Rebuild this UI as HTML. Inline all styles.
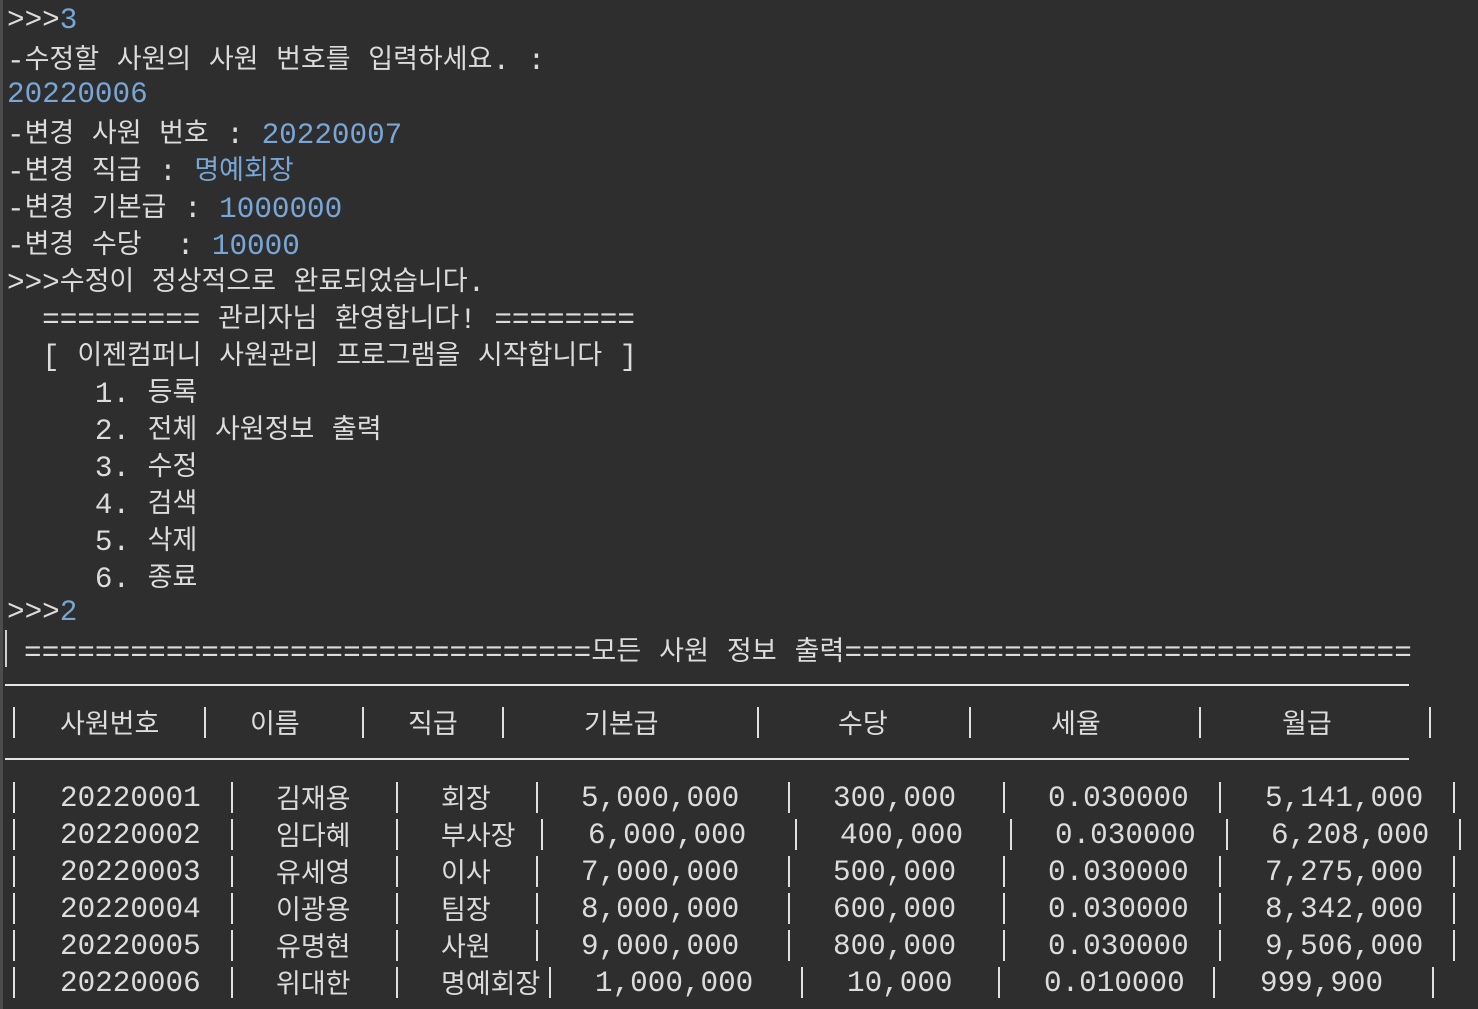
<!DOCTYPE html>
<html><head><meta charset="utf-8"><style>
html,body{margin:0;padding:0}
body{width:1478px;height:1009px;background:#2e2e2e;position:relative;overflow:hidden;font-family:"Liberation Mono","Noto Sans CJK KR",monospace;font-size:29.3px;color:#dcdcdc}
.l{position:absolute;left:7px;height:37px;line-height:37px;white-space:pre}
.kl{margin-top:4px}
.k{font-family:"Noto Sans CJK KR","NanumGothic",sans-serif;font-size:27px}
.l .k{position:relative;top:-1px;line-height:1}
.c.k{margin-top:-2px}
.b{color:#78a6d6}
.c{position:absolute;height:37px;line-height:37px;white-space:pre}
.p{position:absolute;width:2px;height:31px;background:#e0e0e0}
.r{position:absolute;left:5px;width:1404px;height:2px;background:#e6e6e6}
</style></head><body>
<div style="position:absolute;left:0;top:0;width:3px;height:1009px;background:#4c4c4c"></div>
<div style="position:absolute;left:5px;top:630px;width:2px;height:37px;background:#cfcfcf"></div>

<div class="l" style="top:2px">&gt;&gt;&gt;<span class="b">3</span></div>
<div class="l kl" style="top:39px">-<span class="k">수정할</span> <span class="k">사원의</span> <span class="k">사원</span> <span class="k">번호를</span> <span class="k">입력하세요</span>. :</div>
<div class="l b" style="top:76px">20220006</div>
<div class="l kl" style="top:113px">-<span class="k">변경</span> <span class="k">사원</span> <span class="k">번호</span> : <span class="b">20220007</span></div>
<div class="l kl" style="top:150px">-<span class="k">변경</span> <span class="k">직급</span> : <span class="k b">명예회장</span></div>
<div class="l kl" style="top:187px">-<span class="k">변경</span> <span class="k">기본급</span> : <span class="b">1000000</span></div>
<div class="l kl" style="top:224px">-<span class="k">변경</span> <span class="k">수당</span>  : <span class="b">10000</span></div>
<div class="l kl" style="top:261px">&gt;&gt;&gt;<span class="k">수정이</span> <span class="k">정상적으로</span> <span class="k">완료되었습니다</span>.</div>
<div class="l kl" style="top:298px">  ========= <span class="k">관리자님</span> <span class="k">환영합니다</span>! ========</div>
<div class="l kl" style="top:335px">  [ <span class="k">이젠컴퍼니</span> <span class="k">사원관리</span> <span class="k">프로그램을</span> <span class="k">시작합니다</span> ]</div>
<div class="l kl" style="top:372px">     1. <span class="k">등록</span></div>
<div class="l kl" style="top:409px">     2. <span class="k">전체</span> <span class="k">사원정보</span> <span class="k">출력</span></div>
<div class="l kl" style="top:446px">     3. <span class="k">수정</span></div>
<div class="l kl" style="top:483px">     4. <span class="k">검색</span></div>
<div class="l kl" style="top:520px">     5. <span class="k">삭제</span></div>
<div class="l kl" style="top:557px">     6. <span class="k">종료</span></div>
<div class="l" style="top:594px">&gt;&gt;&gt;<span class="b">2</span></div>
<div class="l kl" style="top:631px;left:24px;letter-spacing:0.15px">================================<span class="k">모든</span> <span class="k">사원</span> <span class="k">정보</span> <span class="k">출력</span>================================</div>

<div class="r" style="top:684px"></div>
<div class="r" style="top:758px"></div>

<div class="p" style="left:13px;top:707px"></div><div class="p" style="left:204px;top:707px"></div><div class="p" style="left:362px;top:707px"></div><div class="p" style="left:502px;top:707px"></div><div class="p" style="left:757px;top:707px"></div><div class="p" style="left:969px;top:707px"></div><div class="p" style="left:1199px;top:707px"></div><div class="p" style="left:1429px;top:707px"></div>
<div class="c k" style="left:60px;top:705px">사원번호</div>
<div class="c k" style="left:250px;top:705px">이름</div>
<div class="c k" style="left:408px;top:705px">직급</div>
<div class="c k" style="left:584px;top:705px">기본급</div>
<div class="c k" style="left:838px;top:705px">수당</div>
<div class="c k" style="left:1051px;top:705px">세율</div>
<div class="c k" style="left:1282px;top:705px">월급</div>

<div class="p" style="left:13px;top:782px"></div><div class="p" style="left:231px;top:782px"></div><div class="p" style="left:396px;top:782px"></div><div class="p" style="left:536px;top:782px"></div><div class="p" style="left:788px;top:782px"></div><div class="p" style="left:1003px;top:782px"></div><div class="p" style="left:1219px;top:782px"></div><div class="p" style="left:1453px;top:782px"></div>
<div class="c" style="left:60px;top:780px">20220001</div><div class="c k" style="left:276px;top:780px">김재용</div><div class="c k" style="left:441px;top:780px">회장</div><div class="c" style="left:581px;top:780px">5,000,000</div><div class="c" style="left:833px;top:780px">300,000</div><div class="c" style="left:1048px;top:780px">0.030000</div><div class="c" style="left:1265px;top:780px">5,141,000</div>

<div class="p" style="left:13px;top:819px"></div><div class="p" style="left:231px;top:819px"></div><div class="p" style="left:396px;top:819px"></div><div class="p" style="left:541px;top:819px"></div><div class="p" style="left:795px;top:819px"></div><div class="p" style="left:1010px;top:819px"></div><div class="p" style="left:1226px;top:819px"></div><div class="p" style="left:1459px;top:819px"></div>
<div class="c" style="left:60px;top:817px">20220002</div><div class="c k" style="left:276px;top:817px">임다혜</div><div class="c k" style="left:441px;top:817px">부사장</div><div class="c" style="left:588px;top:817px">6,000,000</div><div class="c" style="left:840px;top:817px">400,000</div><div class="c" style="left:1055px;top:817px">0.030000</div><div class="c" style="left:1271px;top:817px">6,208,000</div>

<div class="p" style="left:13px;top:856px"></div><div class="p" style="left:231px;top:856px"></div><div class="p" style="left:396px;top:856px"></div><div class="p" style="left:536px;top:856px"></div><div class="p" style="left:788px;top:856px"></div><div class="p" style="left:1003px;top:856px"></div><div class="p" style="left:1219px;top:856px"></div><div class="p" style="left:1453px;top:856px"></div>
<div class="c" style="left:60px;top:854px">20220003</div><div class="c k" style="left:276px;top:854px">유세영</div><div class="c k" style="left:441px;top:854px">이사</div><div class="c" style="left:581px;top:854px">7,000,000</div><div class="c" style="left:833px;top:854px">500,000</div><div class="c" style="left:1048px;top:854px">0.030000</div><div class="c" style="left:1265px;top:854px">7,275,000</div>

<div class="p" style="left:13px;top:893px"></div><div class="p" style="left:231px;top:893px"></div><div class="p" style="left:396px;top:893px"></div><div class="p" style="left:536px;top:893px"></div><div class="p" style="left:788px;top:893px"></div><div class="p" style="left:1003px;top:893px"></div><div class="p" style="left:1219px;top:893px"></div><div class="p" style="left:1453px;top:893px"></div>
<div class="c" style="left:60px;top:891px">20220004</div><div class="c k" style="left:276px;top:891px">이광용</div><div class="c k" style="left:441px;top:891px">팀장</div><div class="c" style="left:581px;top:891px">8,000,000</div><div class="c" style="left:833px;top:891px">600,000</div><div class="c" style="left:1048px;top:891px">0.030000</div><div class="c" style="left:1265px;top:891px">8,342,000</div>

<div class="p" style="left:13px;top:930px"></div><div class="p" style="left:231px;top:930px"></div><div class="p" style="left:396px;top:930px"></div><div class="p" style="left:536px;top:930px"></div><div class="p" style="left:788px;top:930px"></div><div class="p" style="left:1003px;top:930px"></div><div class="p" style="left:1219px;top:930px"></div><div class="p" style="left:1453px;top:930px"></div>
<div class="c" style="left:60px;top:928px">20220005</div><div class="c k" style="left:276px;top:928px">유명현</div><div class="c k" style="left:441px;top:928px">사원</div><div class="c" style="left:581px;top:928px">9,000,000</div><div class="c" style="left:833px;top:928px">800,000</div><div class="c" style="left:1048px;top:928px">0.030000</div><div class="c" style="left:1265px;top:928px">9,506,000</div>

<div class="p" style="left:13px;top:967px"></div><div class="p" style="left:231px;top:967px"></div><div class="p" style="left:396px;top:967px"></div><div class="p" style="left:549px;top:967px"></div><div class="p" style="left:801px;top:967px"></div><div class="p" style="left:998px;top:967px"></div><div class="p" style="left:1213px;top:967px"></div><div class="p" style="left:1432px;top:967px"></div>
<div class="c" style="left:60px;top:965px">20220006</div><div class="c k" style="left:276px;top:965px">위대한</div><div class="c k" style="left:441px;top:965px">명예회장</div><div class="c" style="left:595px;top:965px">1,000,000</div><div class="c" style="left:847px;top:965px">10,000</div><div class="c" style="left:1044px;top:965px">0.010000</div><div class="c" style="left:1260px;top:965px">999,900</div>
</body></html>
